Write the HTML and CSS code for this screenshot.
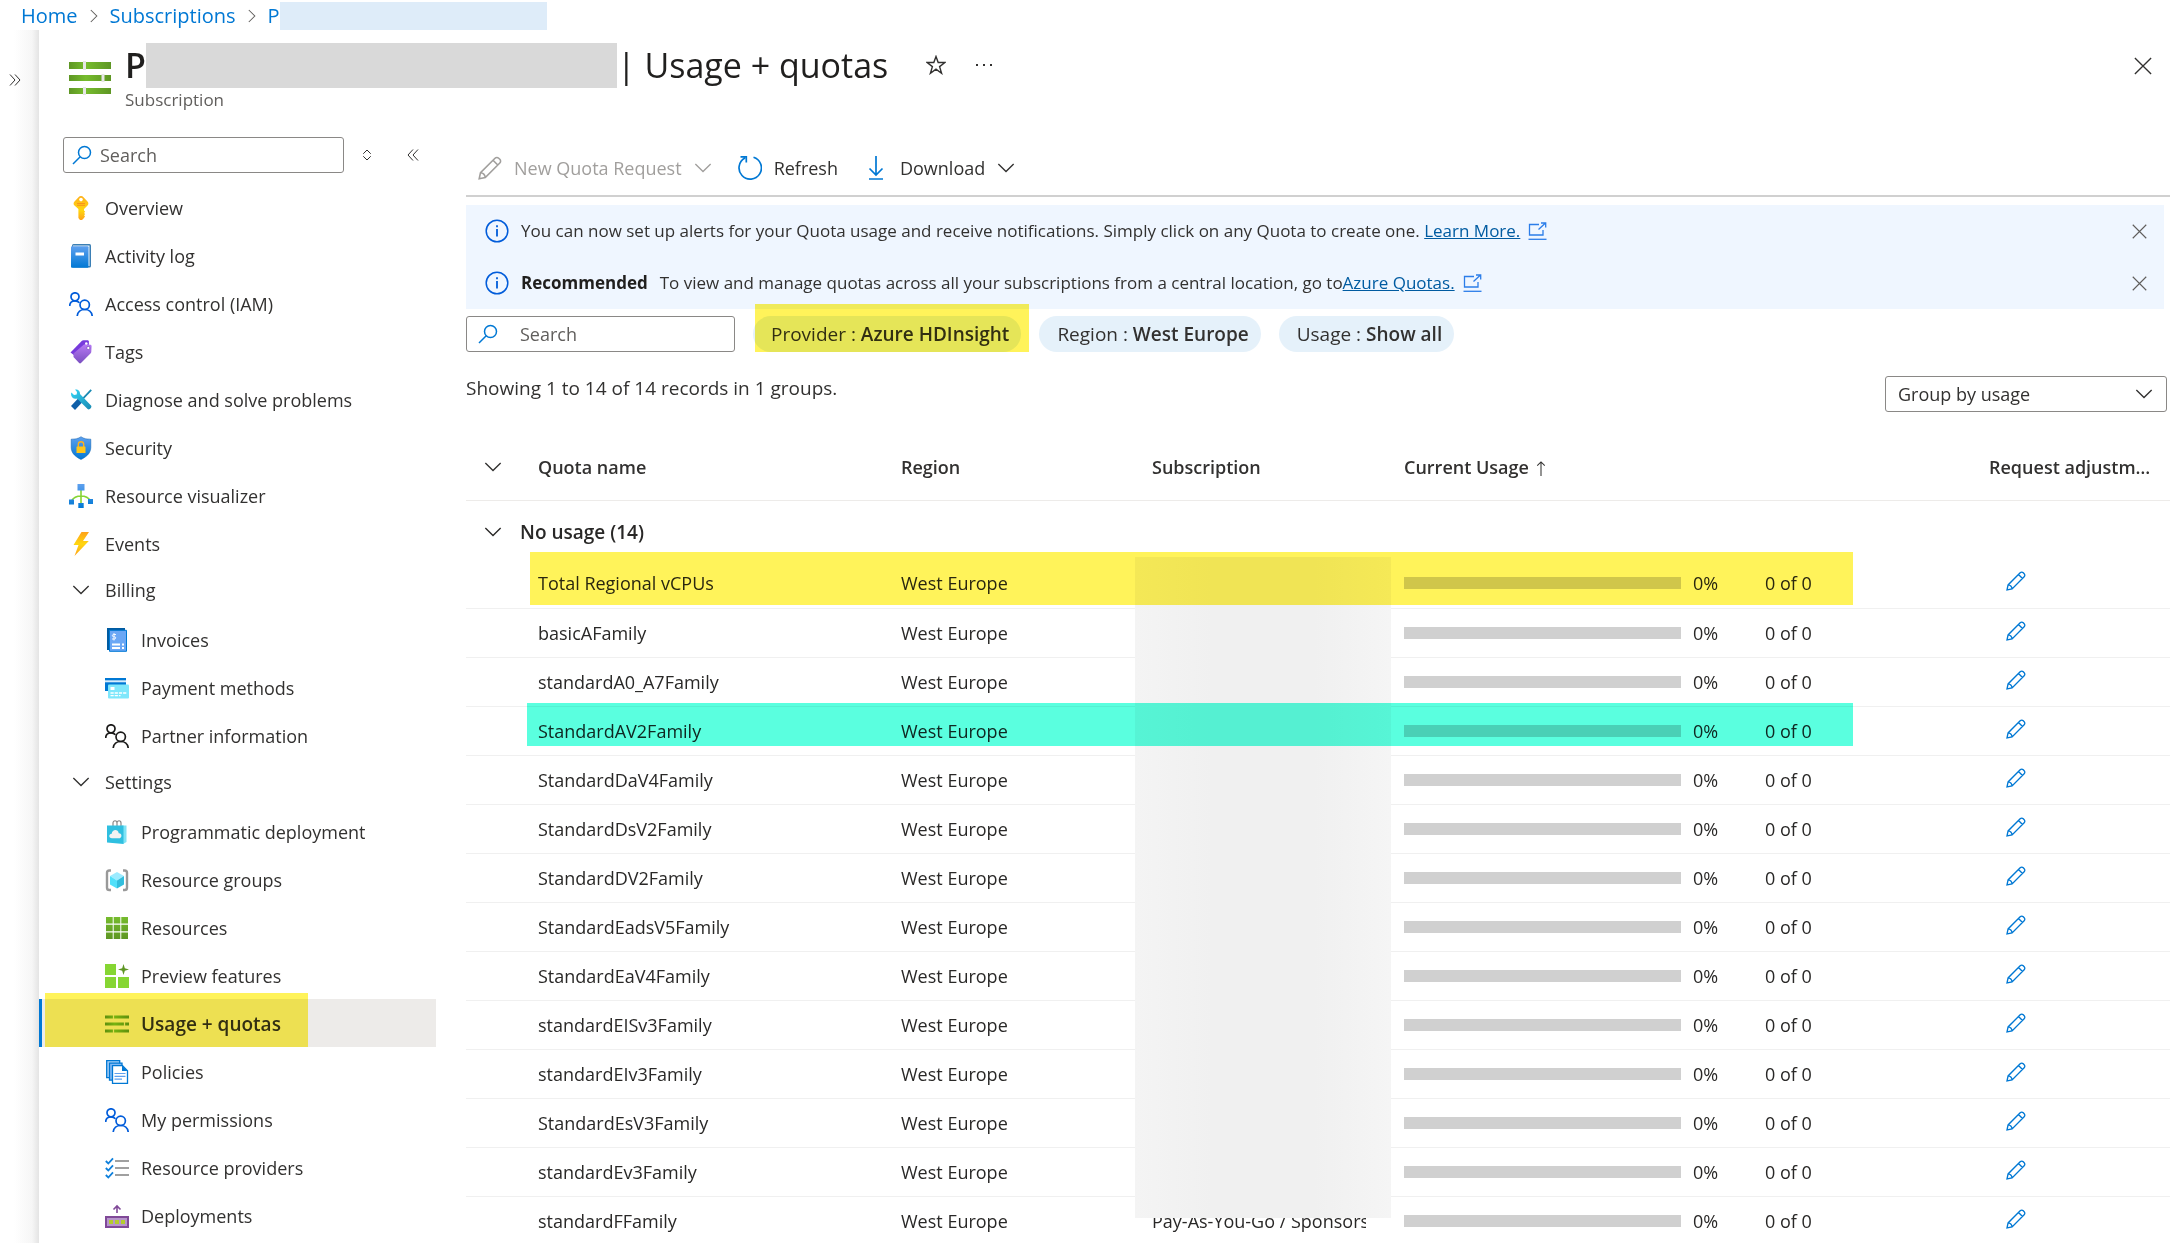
FILE: index.html
```
<!DOCTYPE html>
<html lang="en">
<head>
    <meta charset="UTF-8">
    <meta name="viewport" content="width=device-width, initial-scale=1.0">
    <title>Usage + quotas</title>
    <link rel="stylesheet" href="styles.css">
</head>
<body>
    <!-- Shared icons -->
    <svg class="sprite" aria-hidden="true">
        <defs>
            <linearGradient id="g-green"><stop offset="0" stop-color="#5e9624"/><stop offset=".4" stop-color="#76bc2d"/><stop offset="1" stop-color="#5e9624"/></linearGradient>
            <linearGradient id="g-green-v" x2="0" y2="1"><stop offset="0" stop-color="#76bc2d"/><stop offset="1" stop-color="#5e9624"/></linearGradient>
            <linearGradient id="g-blue" x2="0" y2="1"><stop offset="0" stop-color="#5ea0ef"/><stop offset="1" stop-color="#0078d4"/></linearGradient>
            <linearGradient id="g-gold" x2="0" y2="1"><stop offset="0" stop-color="#feb01c"/><stop offset=".6" stop-color="#ffd70f"/><stop offset="1" stop-color="#fea11b"/></linearGradient>
            <linearGradient id="g-bolt" x2="0" y2="1"><stop offset="0" stop-color="#fea11b"/><stop offset=".5" stop-color="#ffd70f"/><stop offset="1" stop-color="#fea11b"/></linearGradient>
            <linearGradient id="g-tag" x2="0" y2="1"><stop offset="0" stop-color="#b77af4"/><stop offset="1" stop-color="#7a4fc0"/></linearGradient>
            <linearGradient id="g-tool" x2="1" y2="1"><stop offset="0" stop-color="#32d4f5"/><stop offset="1" stop-color="#198ab3"/></linearGradient>
        </defs>
        <symbol id="i-chevron" viewBox="0 0 20 20"><path d="M1.500 5.500l8.500 8.500 8.500-8.500" fill="none" stroke="currentColor" stroke-width="1.500"/></symbol>
        <symbol id="i-crumb" viewBox="0 0 12 20"><path d="M2 2.500l7.500 7.500L2 17.500" fill="none" stroke="currentColor" stroke-width="1.300"/></symbol>
        <symbol id="i-double" viewBox="0 0 12 12"><path d="M1 .5L6 6l-5 5.500M6 .5L11 6l-5 5.500" fill="none" stroke="currentColor"/></symbol>
        <symbol id="i-close" viewBox="0 0 20 20"><path d="M1 1l18 18M19 1L1 19" fill="none" stroke="currentColor" stroke-width="1.500"/></symbol>
        <symbol id="i-sort" viewBox="0 0 12 14"><path d="M1.500 5.500L6 1l4.500 4.500M1.500 8.500L6 13l4.500-4.500" fill="none" stroke="currentColor" stroke-width="1.200"/></symbol>
        <symbol id="i-search" viewBox="0 0 20 20"><circle cx="12.500" cy="7.500" r="6" fill="none" stroke="currentColor" stroke-width="1.500"/><path d="M8.200 11.800L1 19" stroke="currentColor" stroke-width="1.500"/></symbol>
        <symbol id="i-pencil" viewBox="0 0 24 24"><path d="M17 2.200a2.600 2.600 0 0 1 3.700 0l1.100 1.100a2.600 2.600 0 0 1 0 3.700L7.300 21.500 1.200 22.800l1.300-6.100zM15 4.200l4.800 4.800M2.500 16.700c2.600.2 4.400 1.800 4.800 4.800" fill="none" stroke="currentColor" stroke-width="1.600"/></symbol>
        <symbol id="i-info" viewBox="0 0 24 24"><circle cx="12" cy="12" r="10.800" fill="none" stroke="currentColor" stroke-width="1.500"/><path d="M12 10v7.500M12 6.300v2" stroke="currentColor" stroke-width="1.800"/></symbol>
        <symbol id="i-external" viewBox="0 0 19 18"><path d="M11 2.500H1.500v10.500H15V8M10.500 7.500l7-6.500M13 1h4.700v4.500" fill="none" stroke="currentColor" stroke-width="1.300"/><path d="M.5 17.300h18" stroke="currentColor" stroke-width="1.300"/></symbol>
        <symbol id="i-people" viewBox="0 0 24 24"><g fill="none" stroke="currentColor" stroke-width="1.700"><circle cx="6" cy="4.800" r="4"/><path d="M.7 14c0-3.200 2.300-5.200 5.300-5.200 1.800 0 3.300.6 4.400 1.900"/><circle cx="15.700" cy="12.800" r="4.700"/><path d="M8.200 24c.4-4 3.500-6.500 7.500-6.500s7.100 2.500 7.500 6.500"/></g></symbol>
        <symbol id="i-quota" viewBox="0 0 24 20"><path d="M0 1.500h24v3H0zM0 8.500h24v3H0zM0 15.500h24v3H0z" fill="url(#g-green)"/><path d="M8.500 1v4M19.500 8v4M8.500 15v4" stroke="#e6e6e6" stroke-width="1.200"/></symbol>
    </svg>

    <nav class="breadcrumb" aria-label="Breadcrumb">
        <a href="#">Home</a>
        <svg class="crumb-sep"><use href="#i-crumb"/></svg>
        <a href="#">Subscriptions</a>
        <svg class="crumb-sep"><use href="#i-crumb"/></svg>
        <a href="#" class="crumb-current">P<span class="crumb-mask"></span></a>
    </nav>

    <div class="shell">
        <div class="rail">
            <button class="icon-btn" aria-label="Expand"><svg class="icon-12"><use href="#i-double"/></svg></button>
        </div>

        <div class="blade">
            <header class="blade-header">
                <svg class="header-icon" viewBox="0 0 42 34">
                    <path d="M0 1h42v7H0zM0 14h42v6H0zM0 27h42v6H0z" fill="url(#g-green)"/>
                    <path d="M15.500 0v9M34 13v8M15.500 26v8" stroke="#e6e6e6" stroke-width="3"/>
                </svg>
                <div class="header-text">
                    <div class="title-row">
                        <h1><b>P</b><span class="title-mask"></span><span>| Usage + quotas</span></h1>
                        <button class="icon-btn" aria-label="Favorite">
                            <svg class="icon-20" viewBox="0 0 20 20"><path d="M10 1.500l2.200 6H19l-5.400 4.100 2 6.700L10 14.200l-5.600 4.100 2-6.700L1 7.500h6.800z" fill="none" stroke="currentColor" stroke-width="1.400"/></svg>
                        </button>
                        <button class="icon-btn" aria-label="More">
                            <svg class="icon-20" viewBox="0 0 20 20"><path d="M2 9h2v2H2zM9 9h2v2H9zM16 9h2v2h-2z" fill="currentColor"/></svg>
                        </button>
                    </div>
                    <p class="subtitle">Subscription</p>
                </div>
                <button class="icon-btn close" aria-label="Close"><svg class="icon-18"><use href="#i-close"/></svg></button>
            </header>

            <div class="blade-body">
                <aside class="sidebar">
                    <div class="side-tools">
                        <label class="search-box">
                            <svg class="icon-20"><use href="#i-search"/></svg>
                            <input type="text" placeholder="Search" aria-label="Search menu">
                        </label>
                        <button class="icon-btn" aria-label="Sort"><svg class="icon-sort"><use href="#i-sort"/></svg></button>
                        <button class="icon-btn flip" aria-label="Collapse"><svg class="icon-12"><use href="#i-double"/></svg></button>
                    </div>

                    <nav class="menu" aria-label="Subscription menu">
                        <a href="#" class="menu-item">
                            <svg class="icon-24" viewBox="0 0 24 24"><path d="M12 0c1 0 1.800.5 2.500 1.200l4 4.200c1.200 1.300 1.100 2.900 0 4.100L15 13v1.500l1.200 1.200-1.200 1.200 1.200 1.200L15 19.300l1 1-1 1.600-2 2.100h-2l-1.600-2V13L5.500 9.500c-1.200-1.200-1.200-2.800 0-4.100l4-4.200C10.200.5 11 0 12 0z" fill="url(#g-gold)"/><circle cx="12" cy="3.600" r="1.800" fill="#fff"/><path d="M8 7.500h8M8 9.300h8" stroke="#f78d1e" stroke-width=".9"/></svg>
                            Overview
                        </a>
                        <a href="#" class="menu-item">
                            <svg class="icon-24" viewBox="0 0 24 24"><rect x="3" y="0" width="19" height="23.500" rx="1.500" fill="#3b7fb5"/><path d="M4 1.500h16.500V22H5z" fill="#e8f3fb"/><rect x="2" y="2.200" width="17.500" height="21.600" rx="1" fill="url(#g-blue)"/><path d="M6.500 8.500h8.500v3H6.500z" fill="#fff"/></svg>
                            Activity log
                        </a>
                        <a href="#" class="menu-item">
                            <svg class="icon-24 blue"><use href="#i-people"/></svg>
                            Access control (IAM)
                        </a>
                        <a href="#" class="menu-item">
                            <svg class="icon-24" viewBox="0 0 24 24"><path d="M1.500 12.500L12.700 1c.5-.5 1-.7 1.600-.7h4.200c.8 0 1.400.6 1.400 1.400v3.500L5.500 15.500z" fill="#773adc"/><path d="M4.500 13.500L14.700 4.800c.5-.4.900-.6 1.500-.6l5 .5c.8 0 1.400.6 1.400 1.400l-.3 5.500c0 .7-.2 1.200-.6 1.600L12 23c-.6.600-1.300.6-1.900 0L4.500 17z" fill="url(#g-tag)"/><circle cx="17.300" cy="3.500" r="1.300" fill="#fff"/><circle cx="19.300" cy="8" r="1.600" fill="#fff" stroke="#6b3fb3" stroke-width=".6"/></svg>
                            Tags
                        </a>
                        <a href="#" class="menu-item">
                            <svg class="icon-24" viewBox="0 0 24 24"><path d="M22.200 1.800l-9 9.600" stroke="#198ab3" stroke-width="1.800"/><path d="M12 11.500L4 20" stroke="#0f5fa8" stroke-width="5.500"/><path d="M6 1.500c2.700-.6 5.300 1.500 5 4.500l11 11.600c1.500 1.600-1.600 5-3.400 3.500L8 10.500c-3 .9-6-1-6-4.500 0-.6.200-1.200.4-1.600L5 7l2.700-.6L8 4z" fill="url(#g-tool)"/></svg>
                            Diagnose and solve problems
                        </a>
                        <a href="#" class="menu-item">
                            <svg class="icon-24" viewBox="0 0 24 24"><path d="M12 .7c3 2 5 2.300 9.800 2.500v8.300c0 6.500-5.800 10-9.800 12-4-2-9.800-5.500-9.800-12V3.200C7 3 9 2.700 12 .7z" fill="url(#g-blue)" stroke="#0b5cad" stroke-width=".5"/><path d="M9.300 11V8.500c0-3.600 5.400-3.600 5.400 0V11" fill="none" stroke="#feb01c" stroke-width="1.400"/><rect x="7.500" y="10.500" width="9" height="6.500" rx=".6" fill="#ffc61a"/></svg>
                            Security
                        </a>
                        <a href="#" class="menu-item">
                            <svg class="icon-24" viewBox="0 0 24 24"><path d="M12 6v14M2.500 17c2-3.500 5-5 9.500-5s7.500 1.500 9.500 5" fill="none" stroke="#86d633" stroke-width="1.600"/><path d="M8.500 0h7v6.500h-7zM0 15.500h5v5H0zM9.300 19h5.400v5H9.300zM19 15h5v5h-5z" fill="url(#g-blue)"/></svg>
                            Resource visualizer
                        </a>
                        <a href="#" class="menu-item">
                            <svg class="icon-24" viewBox="0 0 24 24"><path d="M12.500 0h7.500l-6 9h5.800L5.500 24l4-11H4.500z" fill="url(#g-bolt)"/></svg>
                            Events
                        </a>

                        <button class="menu-item menu-group" aria-expanded="true"><span class="icon-24"><svg class="icon-18"><use href="#i-chevron"/></svg></span>Billing</button>
                        <a href="#" class="menu-item sub">
                            <svg class="icon-24" viewBox="0 0 24 24"><path d="M2 0h18v22H2z" fill="#005ba1"/><path d="M4.500 2.300h17v21h-17z" fill="#6ba7f5" stroke="#0078d4"/><path d="M7 16.500h8M7 20h8M17 16.500h2M17 20h2" stroke="#fff" stroke-width="1.800"/><path d="M11 6.500H8.500c-1.500 0-1.500 2.200 0 2.200h1c1.600 0 1.600 2.300 0 2.300H7M9 5v7.500" fill="none" stroke="#fff" stroke-width=".9"/></svg>
                            Invoices
                        </a>
                        <a href="#" class="menu-item sub">
                            <svg class="icon-24" viewBox="0 0 24 24"><path d="M0 2h21v13H0z" fill="#0078d4"/><path d="M0 4.300h21v2H0z" fill="#d7ecfb"/><rect x="3" y="8.500" width="21" height="14" rx="1" fill="#7fe7fb"/><path d="M5.500 11h4v3h-4z" fill="#fff"/><path d="M5.500 17h16M5.500 19.600h10" stroke="#fff" stroke-width="1.300" stroke-dasharray="3.200 1"/></svg>
                            Payment methods
                        </a>
                        <a href="#" class="menu-item sub">
                            <svg class="icon-24 black"><use href="#i-people"/></svg>
                            Partner information
                        </a>

                        <button class="menu-item menu-group" aria-expanded="true"><span class="icon-24"><svg class="icon-18"><use href="#i-chevron"/></svg></span>Settings</button>
                        <a href="#" class="menu-item sub">
                            <svg class="icon-24" viewBox="0 0 24 24"><path d="M8 6V3c0-3 4-3 4 0v3M12 6V3c0-3 4-3 4 0v3" fill="none" stroke="#888" stroke-width="1.200"/><path d="M17 5.500h4.500V22L18 24z" fill="#7fe3f5"/><path d="M2 5.500h16.500V24L2 22.500z" fill="#2fbfe0"/><path d="M7 18.300c-3.500 0-3.500-4.300-.3-4.500.6-5 6.600-4.600 7 -.6 3.500-.2 3.800 5.100 0 5.100z" fill="#f2f2f2"/></svg>
                            Programmatic deployment
                        </a>
                        <a href="#" class="menu-item sub">
                            <svg class="icon-24" viewBox="0 0 24 24"><path d="M6 2.500H4.300C2.800 2.500 2 3.300 2 4.800v14.900c0 1.500.8 2.300 2.300 2.300H6M18 2.500h1.700c1.500 0 2.300.8 2.300 2.300v14.900c0 1.500-.8 2.300-2.300 2.300H18" fill="none" stroke="#999" stroke-width="2.400"/><path d="M12 4l7 4-7 4.500L5 8z" fill="#9cebff"/><path d="M5 8l7 4.500v8L5 16.500z" fill="#50e0fa"/><path d="M19 8l-7 4.500v8l7-4z" fill="#32bedd"/></svg>
                            Resource groups
                        </a>
                        <a href="#" class="menu-item sub">
                            <svg class="icon-24" viewBox="0 0 24 24"><path d="M1 1h6.700v6.500H1zM8.700 1h6.600v6.500H8.700zM16.300 1H23v6.500h-6.700zM1 8.700h6.700v6.600H1zM8.700 8.700h6.600v6.600H8.700zM16.300 8.700H23v6.600h-6.700zM1 16.500h6.700V23H1zM8.700 16.500h6.600V23H8.700zM16.300 16.500H23V23h-6.700z" fill="url(#g-green-v)"/></svg>
                            Resources
                        </a>
                        <a href="#" class="menu-item sub">
                            <svg class="icon-24" viewBox="0 0 24 24"><path d="M0 0h11v11H0zM0 13h11v11H0zM13 13h11v11H13z" fill="#86d633"/><path d="M18.500 0l1.300 4.200L24 5.500l-4.200 1.300L18.500 11l-1.300-4.200L13 5.500l4.200-1.300z" fill="#5e9624"/></svg>
                            Preview features
                        </a>
                        <a href="#" class="menu-item sub selected" aria-current="page">
                            <svg class="icon-24"><use href="#i-quota"/></svg>
                            Usage + quotas
                        </a>
                        <a href="#" class="menu-item sub">
                            <svg class="icon-24" viewBox="0 0 24 24"><path d="M1.700.7h13v17h-13z" fill="#a9d0f7" stroke="#0078d4" stroke-width="1.300"/><path d="M4.500 3.200h12.500v17H4.500z" fill="#7fb8f5" stroke="#0078d4" stroke-width="1.300"/><path d="M7.500 5.700h10l5 5v12.600h-15z" fill="#fff" stroke="#0078d4" stroke-width="1.300"/><path d="M17 5.500l5.500 5.500H17z" fill="#0078d4"/><path d="M9.500 13.500h11M9.500 16.300h11M9.500 19.200h7.500" stroke="#5ea0ef" stroke-width="1.200"/></svg>
                            Policies
                        </a>
                        <a href="#" class="menu-item sub">
                            <svg class="icon-24 blue"><use href="#i-people"/></svg>
                            My permissions
                        </a>
                        <a href="#" class="menu-item sub">
                            <svg class="icon-24" viewBox="0 0 24 24"><path d="M10 5h14M10 12h14M10 19h14" stroke="#a0a0a0" stroke-width="2"/><path d="M.8 5l2.500 2.500L8 2.300M.8 12l2.500 2.500L8 9.300M.8 19l2.500 2.500L8 16.300" fill="none" stroke="#0f80dc" stroke-width="1.800"/></svg>
                            Resource providers
                        </a>
                        <a href="#" class="menu-item sub">
                            <svg class="icon-24" viewBox="0 0 24 24"><path d="M12 9V2M8.500 5.500L12 2l3.500 3.500" fill="none" stroke="#804998" stroke-width="1.600"/><path d="M1 13h22v10H1z" fill="#b796cb" stroke="#804998" stroke-width="2"/><path d="M4 16h4v4H4zM10 16h4v4h-4zM16 16h4v4h-4z" fill="#b4cc2e"/></svg>
                            Deployments
                        </a>
                    </nav>
                </aside>

                <main class="content">
                    <div class="commands">
                        <button class="command" disabled><svg class="icon-24"><use href="#i-pencil"/></svg>New Quota Request<svg class="icon-18 cmd-chevron"><use href="#i-chevron"/></svg></button>
                        <button class="command">
                            <svg class="icon-24 azure" viewBox="0 0 24 24"><path d="M15.500 1.200A11.200 11.200 0 1 1 7 2M2.500.8h5.800v5.700" fill="none" stroke="currentColor" stroke-width="1.700"/></svg>
                            Refresh
                        </button>
                        <button class="command">
                            <svg class="icon-24 azure" viewBox="0 0 24 24"><path d="M12 0v19M5.500 12.500L12 19l6.500-6.500M5 23h14" fill="none" stroke="currentColor" stroke-width="1.700"/></svg>
                            Download<svg class="icon-18 cmd-chevron"><use href="#i-chevron"/></svg>
                        </button>
                    </div>

                    <div class="banners">
                        <div class="banner">
                            <svg class="icon-24 blue"><use href="#i-info"/></svg>
                            <p>You can now set up alerts for your Quota usage and receive notifications. Simply click on any Quota to create one. <a href="#">Learn More.</a></p>
                            <svg class="external"><use href="#i-external"/></svg>
                            <button class="icon-btn" aria-label="Dismiss"><svg class="icon-14"><use href="#i-close"/></svg></button>
                        </div>
                        <div class="banner">
                            <svg class="icon-24 blue"><use href="#i-info"/></svg>
                            <p><strong>Recommended</strong>To view and manage quotas across all your subscriptions from a central location, go to<a href="#">Azure Quotas.</a></p>
                            <svg class="external"><use href="#i-external"/></svg>
                            <button class="icon-btn" aria-label="Dismiss"><svg class="icon-14"><use href="#i-close"/></svg></button>
                        </div>
                    </div>

                    <div class="filters">
                        <label class="search-box wide">
                            <svg class="icon-20"><use href="#i-search"/></svg>
                            <input type="text" placeholder="Search" aria-label="Search quotas">
                        </label>
                        <button class="pill marked">Provider : <b>Azure HDInsight</b></button>
                        <button class="pill">Region : <b>West Europe</b></button>
                        <button class="pill">Usage : <b>Show all</b></button>
                    </div>

                    <div class="summary">
                        <p>Showing 1 to 14 of 14 records in 1 groups.</p>
                        <div class="select-box">
                            <select aria-label="Group by">
                                <option>Group by usage</option>
                            </select>
                            <svg class="icon-18"><use href="#i-chevron"/></svg>
                        </div>
                    </div>

                    <div class="table-wrap">
                        <table>
                            <colgroup>
                                <col class="col-toggle"><col class="col-name"><col class="col-region"><col class="col-sub"><col><col class="col-request">
                            </colgroup>
                            <thead>
                                <tr>
                                    <th class="toggle"><button class="icon-btn" aria-label="Collapse all"><svg class="icon-18"><use href="#i-chevron"/></svg></button></th>
                                    <th>Quota name</th>
                                    <th>Region</th>
                                    <th>Subscription</th>
                                    <th>Current Usage <svg class="sort-up" viewBox="0 0 10 16"><path d="M5 16V1M1 5l4-4 4 4" fill="none" stroke="currentColor" stroke-width="1.100"/></svg></th>
                                    <th class="request">Request adjustment</th>
                                </tr>
                            </thead>
                            <tbody>
                                <tr class="group-row">
                                    <td colspan="6"><button class="group-btn" aria-expanded="true"><svg class="icon-18"><use href="#i-chevron"/></svg>No usage (14)</button></td>
                                </tr>
                                <tr><td></td><td>Total Regional vCPUs</td><td>West Europe</td><td></td><td><div class="usage"><progress value="0" max="100"></progress><span class="percent">0%</span><span>0 of 0</span></div></td><td class="edit"><button class="icon-btn" aria-label="Request adjustment"><svg class="icon-20"><use href="#i-pencil"/></svg></button></td></tr>
                                <tr><td></td><td>basicAFamily</td><td>West Europe</td><td></td><td><div class="usage"><progress value="0" max="100"></progress><span class="percent">0%</span><span>0 of 0</span></div></td><td class="edit"><button class="icon-btn" aria-label="Request adjustment"><svg class="icon-20"><use href="#i-pencil"/></svg></button></td></tr>
                                <tr><td></td><td>standardA0_A7Family</td><td>West Europe</td><td></td><td><div class="usage"><progress value="0" max="100"></progress><span class="percent">0%</span><span>0 of 0</span></div></td><td class="edit"><button class="icon-btn" aria-label="Request adjustment"><svg class="icon-20"><use href="#i-pencil"/></svg></button></td></tr>
                                <tr><td></td><td>StandardAV2Family</td><td>West Europe</td><td></td><td><div class="usage"><progress value="0" max="100"></progress><span class="percent">0%</span><span>0 of 0</span></div></td><td class="edit"><button class="icon-btn" aria-label="Request adjustment"><svg class="icon-20"><use href="#i-pencil"/></svg></button></td></tr>
                                <tr><td></td><td>StandardDaV4Family</td><td>West Europe</td><td></td><td><div class="usage"><progress value="0" max="100"></progress><span class="percent">0%</span><span>0 of 0</span></div></td><td class="edit"><button class="icon-btn" aria-label="Request adjustment"><svg class="icon-20"><use href="#i-pencil"/></svg></button></td></tr>
                                <tr><td></td><td>StandardDsV2Family</td><td>West Europe</td><td></td><td><div class="usage"><progress value="0" max="100"></progress><span class="percent">0%</span><span>0 of 0</span></div></td><td class="edit"><button class="icon-btn" aria-label="Request adjustment"><svg class="icon-20"><use href="#i-pencil"/></svg></button></td></tr>
                                <tr><td></td><td>StandardDV2Family</td><td>West Europe</td><td></td><td><div class="usage"><progress value="0" max="100"></progress><span class="percent">0%</span><span>0 of 0</span></div></td><td class="edit"><button class="icon-btn" aria-label="Request adjustment"><svg class="icon-20"><use href="#i-pencil"/></svg></button></td></tr>
                                <tr><td></td><td>StandardEadsV5Family</td><td>West Europe</td><td></td><td><div class="usage"><progress value="0" max="100"></progress><span class="percent">0%</span><span>0 of 0</span></div></td><td class="edit"><button class="icon-btn" aria-label="Request adjustment"><svg class="icon-20"><use href="#i-pencil"/></svg></button></td></tr>
                                <tr><td></td><td>StandardEaV4Family</td><td>West Europe</td><td></td><td><div class="usage"><progress value="0" max="100"></progress><span class="percent">0%</span><span>0 of 0</span></div></td><td class="edit"><button class="icon-btn" aria-label="Request adjustment"><svg class="icon-20"><use href="#i-pencil"/></svg></button></td></tr>
                                <tr><td></td><td>standardEISv3Family</td><td>West Europe</td><td></td><td><div class="usage"><progress value="0" max="100"></progress><span class="percent">0%</span><span>0 of 0</span></div></td><td class="edit"><button class="icon-btn" aria-label="Request adjustment"><svg class="icon-20"><use href="#i-pencil"/></svg></button></td></tr>
                                <tr><td></td><td>standardEIv3Family</td><td>West Europe</td><td></td><td><div class="usage"><progress value="0" max="100"></progress><span class="percent">0%</span><span>0 of 0</span></div></td><td class="edit"><button class="icon-btn" aria-label="Request adjustment"><svg class="icon-20"><use href="#i-pencil"/></svg></button></td></tr>
                                <tr><td></td><td>StandardEsV3Family</td><td>West Europe</td><td></td><td><div class="usage"><progress value="0" max="100"></progress><span class="percent">0%</span><span>0 of 0</span></div></td><td class="edit"><button class="icon-btn" aria-label="Request adjustment"><svg class="icon-20"><use href="#i-pencil"/></svg></button></td></tr>
                                <tr><td></td><td>standardEv3Family</td><td>West Europe</td><td></td><td><div class="usage"><progress value="0" max="100"></progress><span class="percent">0%</span><span>0 of 0</span></div></td><td class="edit"><button class="icon-btn" aria-label="Request adjustment"><svg class="icon-20"><use href="#i-pencil"/></svg></button></td></tr>
                                <tr><td></td><td>standardFFamily</td><td>West Europe</td><td><div class="sub-name">Pay-As-You-Go / Sponsors</div></td><td><div class="usage"><progress value="0" max="100"></progress><span class="percent">0%</span><span>0 of 0</span></div></td><td class="edit"><button class="icon-btn" aria-label="Request adjustment"><svg class="icon-20"><use href="#i-pencil"/></svg></button></td></tr>
                            </tbody>
                        </table>
                        <div class="mask-column"></div>
                        <div class="marker marker-yellow"></div>
                        <div class="marker marker-teal"></div>
                    </div>
                </main>
            </div>
        </div>
    </div>
</body>
</html>
```

FILE: styles.css
```
* {
    margin: 0;
    padding: 0;
    box-sizing: border-box;
}

body {
    height: 100vh;
    overflow: hidden;
    display: flex;
    flex-direction: column;
    background: #fff;
    color: #323130;
    font-family: "Open Sans", "Noto Sans", sans-serif;
    font-size: 18px;
    line-height: 24px;
}

button,
input,
select {
    font: inherit;
    color: inherit;
    background: none;
    border: none;
}

a {
    color: #0078d4;
    text-decoration: none;
}

svg {
    display: block;
    flex: none;
}

.sprite {
    position: absolute;
    width: 0;
    height: 0;
}

.icon-12 { width: 12px; height: 12px; }
.icon-14 { width: 15px; height: 15px; }
.icon-18 { width: 18px; height: 18px; }
.icon-20 { width: 20px; height: 20px; }
.icon-24 { width: 24px; height: 24px; }
.icon-sort { width: 10px; height: 14px; }

.blue { color: #015cda; }
.azure { color: #0078d4; }
.black { color: #1b1a19; }

.icon-btn {
    display: flex;
    align-items: center;
    justify-content: center;
    cursor: pointer;
}

/* Breadcrumb */
.breadcrumb {
    display: flex;
    align-items: center;
    height: 30px;
    padding: 2px 0 0 21px;
    font-size: 20px;
}

.crumb-sep {
    width: 10px;
    height: 16px;
    margin: 0 11px;
    color: #605e5c;
}

.crumb-current {
    display: flex;
    align-items: center;
}

.crumb-mask {
    width: 267px;
    height: 29px;
    background: #deecf9;
}

/* Shell */
.shell {
    flex: 1;
    display: flex;
    min-height: 0;
}

.rail {
    width: 39px;
    padding: 44px 0 0 9px;
    background: linear-gradient(to right, #fff 14px, #f6f6f6 32px, #e4e4e4);
}

.blade {
    flex: 1;
    min-width: 0;
    display: flex;
    flex-direction: column;
    background: #fff;
}

.blade-header {
    display: flex;
    height: 107px;
    padding: 12px 18px 0 30px;
}

.header-icon {
    width: 42px;
    height: 34px;
    margin: 19px 14px 0 0;
}

.header-text {
    flex: 1;
}

.title-row {
    display: flex;
    align-items: center;
    gap: 28px;
    height: 46px;
}

h1 {
    display: flex;
    align-items: center;
    margin-right: 10px;
    font-size: 34px;
    line-height: 46px;
    font-weight: 400;
    color: #201f1e;
}

h1 b {
    font-weight: 600;
}

.title-mask {
    width: 471px;
    height: 45px;
    background: #d9d9d9;
}

.subtitle {
    font-size: 17px;
    color: #605e5c;
}

.close {
    align-self: flex-start;
    padding-top: 15px;
}

.blade-body {
    flex: 1;
    display: flex;
    min-height: 0;
}

/* Sidebar */
.sidebar {
    width: 397px;
    flex: none;
    margin-right: 30px;
}

.side-tools {
    display: flex;
    align-items: center;
    padding-left: 24px;
    margin-bottom: 10px;
}

.side-tools .icon-btn {
    width: 46px;
}

.flip svg {
    transform: rotate(180deg);
}

.search-box {
    display: flex;
    align-items: center;
    gap: 8px;
    width: 282px;
    height: 36px;
    padding: 0 8px;
    border: 1px solid #8a8886;
    border-radius: 3px;
    color: #0078d4;
}

.search-box input {
    flex: 1;
    min-width: 0;
    color: #323130;
    outline: none;
}

.search-box input::placeholder {
    color: #605e5c;
    opacity: 1;
}

.menu-item {
    position: relative;
    display: flex;
    align-items: center;
    gap: 12px;
    width: 100%;
    height: 48px;
    padding: 2px 0 0 30px;
    color: #323130;
    text-align: left;
}

.menu-group {
    padding-bottom: 4px;
}

.menu-group span {
    display: flex;
    align-items: center;
    justify-content: center;
}

.sub {
    padding-left: 66px;
}

.selected {
    background: #edebe9;
    font-size: 19px;
    font-weight: 600;
    box-shadow: inset 3px 0 #0078d4;
}

.selected::after {
    content: "";
    position: absolute;
    left: 6px;
    top: -6px;
    width: 263px;
    bottom: 0;
    background: #fff35a;
    mix-blend-mode: multiply;
}

/* Commands */
.content {
    flex: 1;
    min-width: 0;
}

.commands {
    display: flex;
    gap: 26px;
    height: 60px;
    padding-left: 12px;
    border-bottom: 2px solid #d0d0d0;
}

.command {
    display: flex;
    align-items: center;
    gap: 12px;
    height: 62px;
}

.command:disabled {
    color: #a19f9d;
}

/* Banners */
.banners {
    margin: 8px 6px 7px 0;
    background: #eff6ff;
}

.banner {
    display: flex;
    align-items: center;
    height: 52px;
    padding: 0 17px 0 19px;
    font-size: 17px;
}

.banner p {
    margin-left: 12px;
    white-space: nowrap;
}

.banner p a {
    color: #005ba1;
    text-decoration: underline;
}

.banner strong {
    margin-right: 12px;
    color: #201f1e;
}

.banner .icon-btn {
    margin-left: auto;
    color: #605e5c;
}

.external {
    width: 19px;
    height: 18px;
    margin-left: 8px;
    color: #2b7de9;
}

/* Filters */
.filters {
    display: flex;
    gap: 18px;
}

.wide {
    width: 269px;
    gap: 22px;
    padding: 0 11px;
}

.pill {
    position: relative;
    height: 36px;
    padding: 0 12px 0 18px;
    border-radius: 18px;
    background: #e5f1fa;
    font-size: 19px;
    white-space: nowrap;
}

.pill b {
    font-weight: 600;
}

.marked::after {
    content: "";
    position: absolute;
    left: 2px;
    right: -8px;
    top: -12px;
    bottom: 0;
    background: #fff35a;
    mix-blend-mode: multiply;
}

.summary {
    display: flex;
    justify-content: space-between;
    height: 82px;
    padding: 24px 3px 0 0;
}

.summary p {
    font-size: 19px;
}

.select-box {
    position: relative;
    width: 282px;
    height: 36px;
}

.select-box select {
    appearance: none;
    width: 100%;
    height: 36px;
    padding: 0 40px 0 12px;
    border: 1px solid #8a8886;
    border-radius: 3px;
}

.select-box svg {
    position: absolute;
    right: 14px;
    top: 9px;
    pointer-events: none;
}

/* Quota table */
.table-wrap {
    position: relative;
}

table {
    width: 100%;
    table-layout: fixed;
    border-collapse: collapse;
}

.col-toggle { width: 72px; }
.col-name { width: 363px; }
.col-region { width: 251px; }
.col-sub { width: 252px; }
.col-request { width: 181px; }

th {
    height: 66px;
    border-bottom: 1px solid #edebe9;
    font-weight: 600;
    text-align: left;
}

.toggle .icon-btn,
.group-btn {
    padding-left: 18px;
}

.sort-up {
    display: inline-block;
    width: 10px;
    height: 15px;
    margin-left: 2px;
    vertical-align: -2px;
}

.request {
    padding-right: 14px;
    overflow: hidden;
    white-space: nowrap;
    text-overflow: ellipsis;
}

td {
    height: 49px;
    border-bottom: 1px solid #f0f0f0;
    color: #292827;
}

.group-row td {
    height: 59px;
    border-bottom: none;
}

.group-btn {
    display: flex;
    align-items: center;
    gap: 18px;
    padding-top: 4px;
    font-size: 19px;
    font-weight: 600;
}

.usage {
    display: flex;
    align-items: center;
}

progress {
    appearance: none;
    width: 277px;
    height: 12px;
    border: none;
    background: #d0d0d0;
}

progress::-webkit-progress-bar {
    background: #d0d0d0;
}

.percent {
    width: 72px;
    margin-left: 12px;
}

.edit .icon-btn {
    padding: 0 0 4px 17px;
    color: #0078d4;
}

.sub-name {
    width: 214px;
    overflow: hidden;
    white-space: nowrap;
}

/* Overlays on the table */
.mask-column {
    position: absolute;
    left: 669px;
    top: 123px;
    width: 256px;
    height: 661px;
    background: linear-gradient(to right, #f4f4f4, #f0f0f0 30%, #f0f0f0 70%, #f5f5f5);
}

.marker {
    position: absolute;
    mix-blend-mode: multiply;
}

.marker-yellow {
    left: 64px;
    right: 317px;
    top: 118px;
    height: 53px;
    background: #fff35a;
}

.marker-teal {
    left: 61px;
    right: 317px;
    top: 269px;
    height: 43px;
    background: #5affdf;
}
```
